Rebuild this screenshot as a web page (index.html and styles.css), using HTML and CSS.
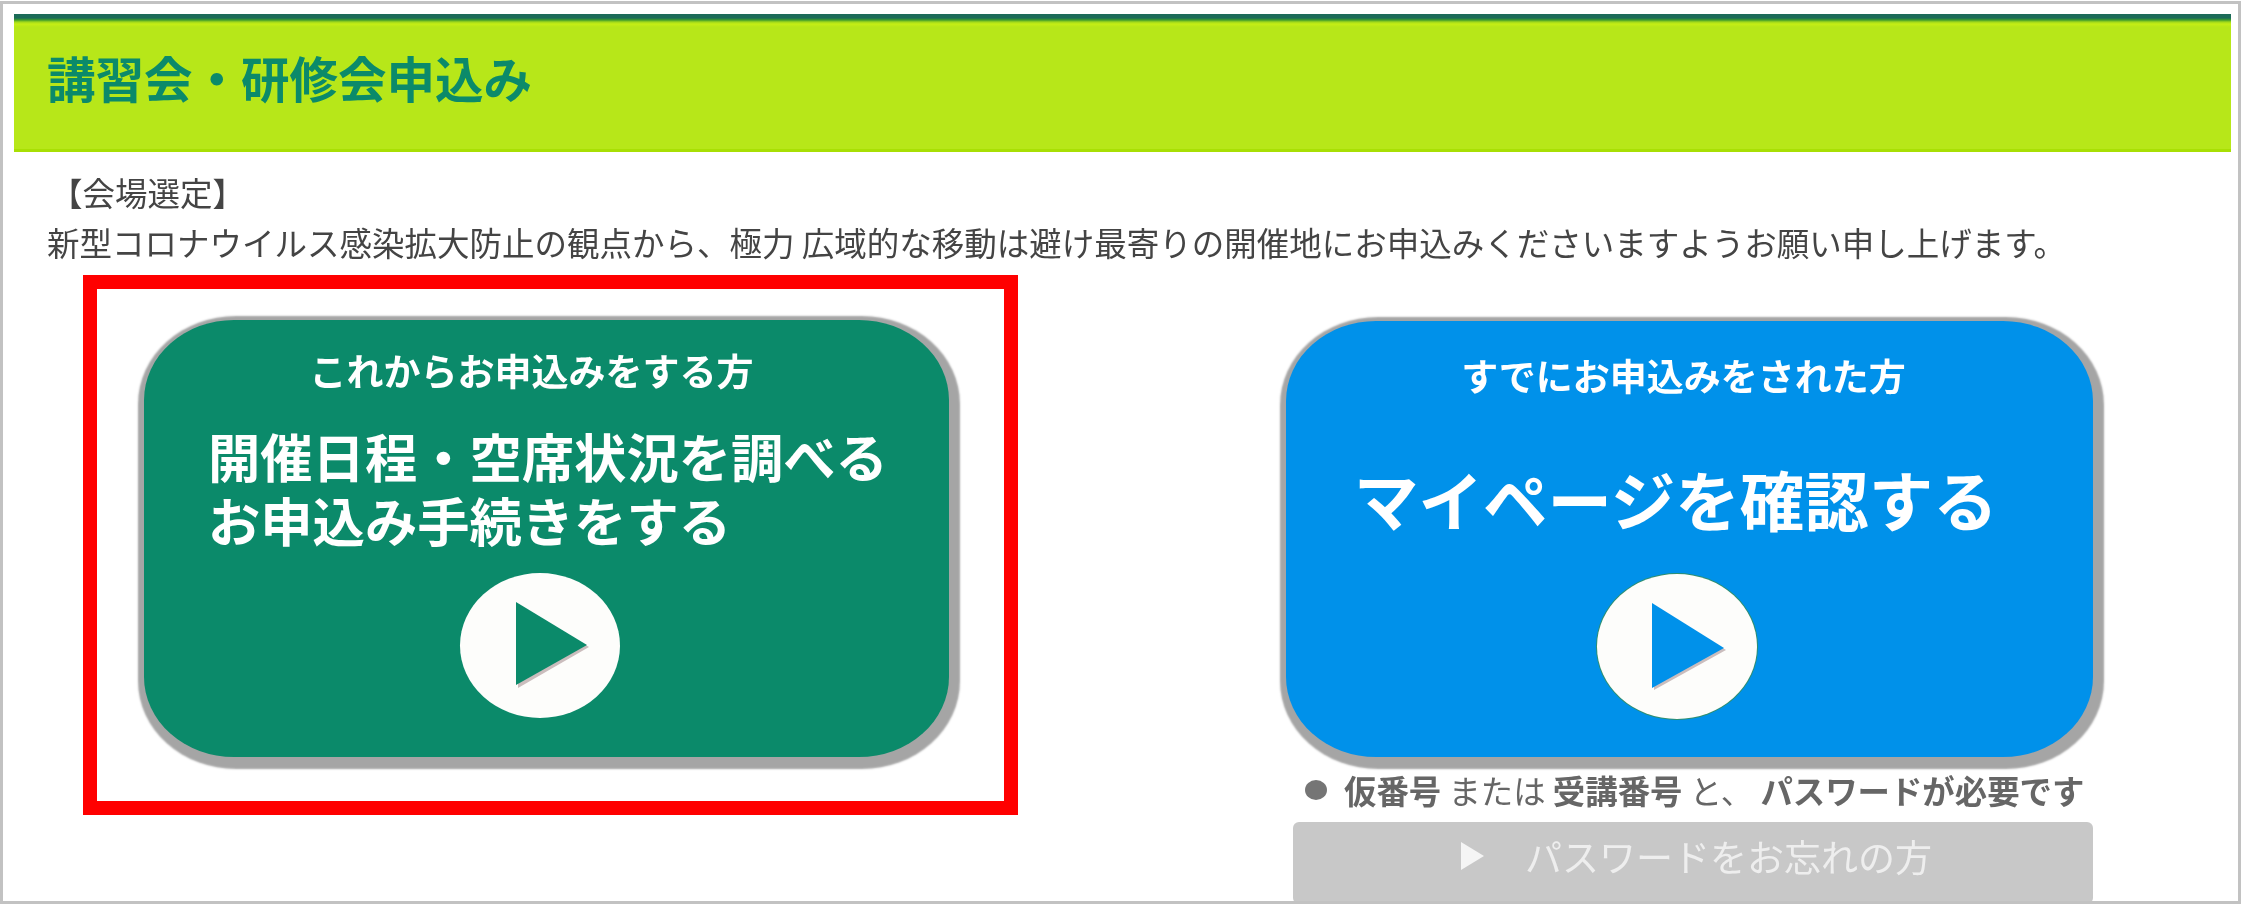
FILE: index.html
```html
<!DOCTYPE html>
<html lang="ja">
<head>
<meta charset="utf-8">
<title>講習会・研修会申込み</title>
<link rel="stylesheet" href="styles.css">
</head>
<body>
<div class="frame">
  <header class="header"><h1 class="title">講習会・研修会申込み</h1></header>
  <div class="notice">
    <p class="notice-head">【会場選定】</p>
    <p class="notice-body">新型コロナウイルス感染拡大防止の観点から、極力 広域的な移動は避け最寄りの開催地にお申込みくださいますようお願い申し上げます。</p>
  </div>
  <div class="columns">
    <div class="highlight">
      <a class="btn btn-green">
        <div class="caption">これからお申込みをする方</div>
        <div class="big">開催日程・空席状況を調べる<br>お申込み手続きをする</div>
        <div class="play">
          <svg class="play-icon" viewBox="0 0 160 145"><polygon class="tri-shadow" points="58,31 129,74 58,115"/><polygon class="tri" points="56,29 127,72 56,112"/></svg>
        </div>
      </a>
    </div>
    <div class="right">
      <a class="btn btn-blue">
        <div class="caption">すでにお申込みをされた方</div>
        <div class="big">マイページを確認する</div>
        <div class="play">
          <svg class="play-icon" viewBox="0 0 160 145"><polygon class="tri-shadow" points="57,31 129,76 57,116"/><polygon class="tri" points="55,29 127,74 55,114"/></svg>
        </div>
      </a>
      <p class="note"><span class="dot"></span><b>仮番号</b> または <b>受講番号</b> と、 <b>パスワードが必要です</b></p>
      <a class="forgot"><svg class="forgot-icon" viewBox="0 0 24 28"><polygon points="1,0 24,14 1,28"/></svg><span>パスワードをお忘れの方</span></a>
    </div>
  </div>
</div>
</body>
</html>
```
FILE: styles.css
```css
html, body { margin: 0; padding: 0; background: #fff; }
body { font-family: "Noto Sans CJK JP", "Noto Sans", sans-serif; color: #444; }
p, h1 { margin: 0; }
.frame {
  box-sizing: border-box;
  width: 2241px;
  height: 903px;
  margin-top: 1px;
  border: 3px solid #c2c2c2;
  overflow: hidden;
}
.header {
  box-sizing: border-box;
  height: 138px;
  margin: 10px 7px 0 11px;
  padding-left: 33px;
  display: flex;
  align-items: center;
  background: linear-gradient(#1b6b58 0, #1b6b58 4px, #3f9c2c 6px, #a0d81c 8px, #c5ee14 10px, #b7e719 13px);
  border-bottom: 3px solid #a8df04;
  filter: blur(.6px);
}
.title { font-size: 48.5px; font-weight: 700; line-height: 1; color: #0b8a6a; margin-top: -8px; }
.notice { margin: 15px 0 8px 44px; font-size: 32.5px; line-height: 50px; filter: blur(.7px); }
.notice-head { padding-left: 3px; }
.notice-body { white-space: nowrap; }
.columns { display: flex; align-items: flex-start; padding-left: 80px; }
.highlight {
  box-sizing: border-box;
  width: 935px;
  height: 540px;
  border: 14px solid #f00;
  padding: 31px 0 0 47px;
  background: #fff;
}
.right { margin-left: 268px; padding-top: 46px; width: 807px; }
.btn { display: block; box-sizing: border-box; color: #fff; border-radius: 90px / 80px; filter: blur(.6px); }
.btn-green { width: 805px; height: 437px; padding-top: 26px; background: #0b8a6a; box-shadow: 2.5px 4px 2px 8px #a5a5a5; }
.btn-blue { width: 807px; height: 436px; padding-top: 30px; background: #0091ea; box-shadow: 2.5px 4px 2px 8px #a5a5a5; }
.caption { font-size: 37px; font-weight: 700; line-height: 48px; text-align: center; }
.btn-green .caption { padding-right: 30px; }
.btn-blue .caption { padding-right: 12px; }
.big { font-weight: 700; white-space: nowrap; }
.btn-green .big { font-size: 52.3px; line-height: 64px; margin: 29px 0 22px; padding-left: 64px; }
.btn-blue .big { font-size: 64.5px; font-weight: 700; line-height: 64px; margin: 67px 0 44px; padding-left: 68px; }
.play { width: 160px; height: 145px; border-radius: 50%; background: #fdfdfb; }
.btn-green .play { margin-left: 316px; }
.btn-blue .play { margin-left: 311px; box-shadow: 0 0 0 1px #2f8f6f; }
.play-icon { display: block; width: 100%; height: 100%; }
.tri-shadow { fill: #cbbdbd; }
.btn-green .tri { fill: #0b8a6a; }
.btn-blue .tri { fill: #0091ea; }
.note {
  display: flex;
  align-items: center;
  white-space: pre;
  margin: 9px 0 0 19px;
  height: 48px;
  font-size: 32.4px;
  line-height: 48px;
  color: #666;
  filter: blur(.7px);
}
.note b { font-weight: 700; }
.dot { width: 22px; height: 20px; margin-right: 17px; border-radius: 50%; background: #757575; }
.forgot {
  box-sizing: border-box;
  display: flex;
  align-items: center;
  height: 82px;
  margin: 8px 0 0 7px;
  width: 800px;
  padding: 0 0 14px 167px;
  border-radius: 6px;
  background: #c8c8c8;
  color: #eee;
  font-size: 37px;
  filter: blur(.6px);
}
.forgot-icon { width: 24px; height: 28px; margin-right: 41px; fill: #f5f5f5; }
```
